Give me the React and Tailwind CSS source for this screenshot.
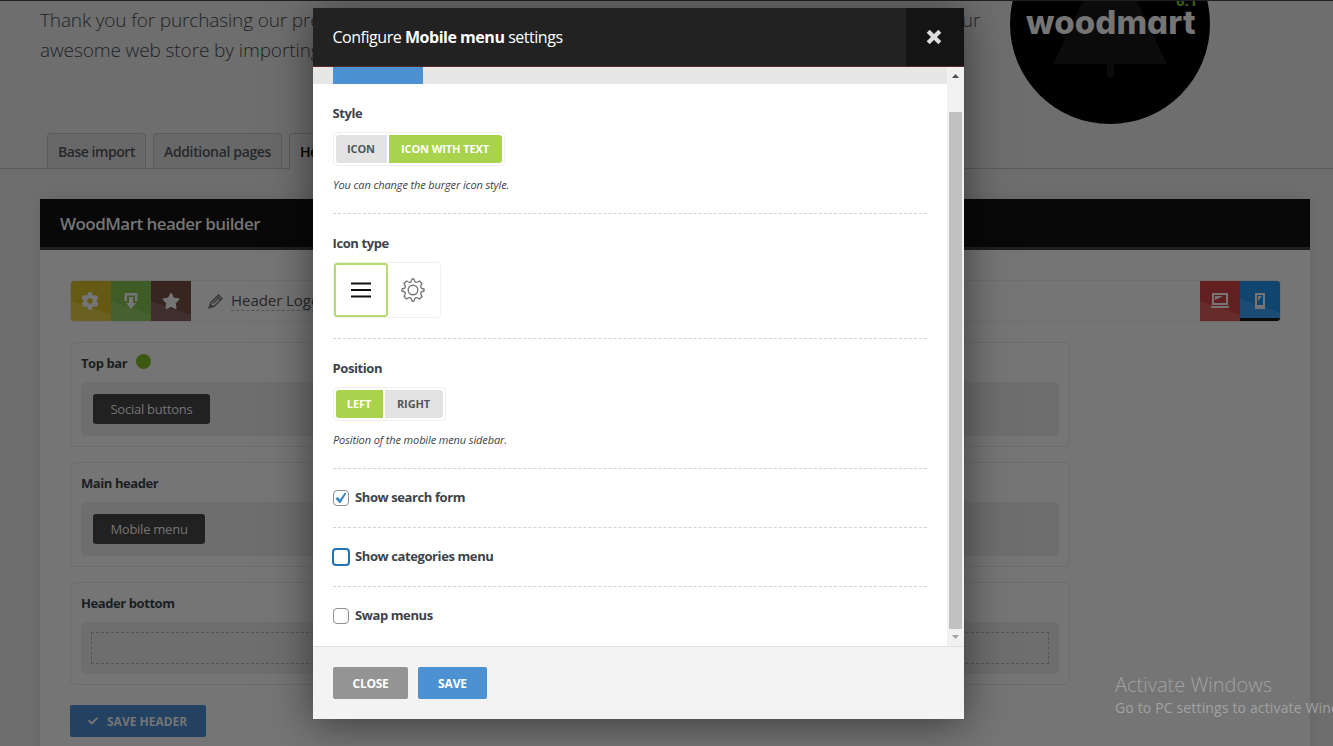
import clsx from "clsx";
import { FaCog, FaStar, FaCheck } from "react-icons/fa";

const rows = [
  { title: "Top bar", element: "Social buttons", width: "w-[117px]", active: true },
  { title: "Main header", element: "Mobile menu", width: "w-[112px]" },
  { title: "Header bottom" },
];

function Logo() {
  return (
    <div className="absolute left-[1010px] top-[-76px] size-[200px] rounded-full bg-black">
      <svg className="absolute inset-0" width="200" height="200" viewBox="0 0 200 200">
        <path d="M100 20 L157 140 H43 Z M97 140 H104 V153 H97 Z" fill="#0b0b0b" />
      </svg>
      <span className="absolute left-[166px] top-[68px] text-[15px] leading-[16px] font-bold text-[#3d5c10]">6.1</span>
      <span className="absolute left-[16px] top-[78px] font-['Inter',sans-serif] text-[33px] leading-[40px] font-extrabold tracking-[0.1px] text-[#757575] [font-feature-settings:'cv11']">
        woodmart
      </span>
    </div>
  );
}

function Intro() {
  return (
    <div className="h-[132px] pl-10 pt-[4px] whitespace-nowrap text-[19px] leading-[30px] font-light text-[#202327]">
      <p className="tracking-[-0.14px]">
        Thank you for purchasing our premium eCommerce theme - WoodMart. Here you are able to start creating your
      </p>
      <p className="tracking-[-0.1px]">awesome web store by importing our dummy content and theme options.</p>
    </div>
  );
}

function Tabs() {
  return (
    <div className="flex h-9 items-end gap-[7px] border-b border-[#5b5b5b] pl-[47px] text-[14px] font-semibold text-[#25282c]">
      <div className="flex h-[35px] w-[99px] items-center justify-center rounded-t-[4px] border border-b-0 border-[#5b5b5b] bg-[#686868] tracking-[-0.45px]">
        Base import
      </div>
      <div className="flex h-[35px] w-[129px] items-center justify-center whitespace-nowrap rounded-t-[4px] border border-b-0 border-[#5b5b5b] bg-[#686868] tracking-[-0.35px]">
        Additional pages
      </div>
      <div className="-mb-px flex h-9 w-[129px] items-center rounded-t-[4px] border border-b-0 border-[#5b5b5b] bg-[#6e6e6e] pl-[10px] tracking-[-0.4px] text-black">
        Header builder
      </div>
    </div>
  );
}

function Toolbar() {
  return (
    <div className="flex h-[42px] w-[1211px] items-center rounded-[4px] border border-[#6e6e6e]">
      <div className="flex overflow-hidden rounded-l-[3px] text-[#757575]">
        <div className="flex size-10 items-center justify-center bg-[linear-gradient(199deg,#645a14_63%,#6a6020_63%)] pr-[2px]">
          <FaCog size={18} />
        </div>
        <div className="flex size-10 items-center justify-center bg-[linear-gradient(199deg,#3f5b26_63%,#466030_63%)]">
          <svg width="14" height="17" viewBox="0 0 14 17" fill="currentColor">
            <path d="M0.500 0H13.500V8H11V2.500H3V8H0.500ZM5 4H9V10H12L7 16L2 10H5Z" />
          </svg>
        </div>
        <div className="flex size-10 items-center justify-center bg-[linear-gradient(199deg,#37251f_63%,#40302d_63%)]">
          <FaStar size={18} />
        </div>
      </div>
      <svg className="ml-[17px]" width="16" height="16" viewBox="0 0 16 16" fill="none" stroke="#3a3a3a" strokeWidth="1.500">
        <path d="M1.500 14.500L3 9.500L10.500 2L14 5.500L6.500 13Z M9 3.500L12.500 7M5 10.500L10 5.500" />
        <path d="M1.500 14.500L2.500 11.500L4.500 13.500Z" fill="#3a3a3a" />
      </svg>
      <span className="-mt-px ml-[7px] border-b border-dashed border-[#555] text-[15px] leading-[20px] font-medium tracking-[-0.05px] text-[#25282c]">
        Header Logo
      </span>
      <div className="ml-auto flex overflow-hidden rounded-r-[3px] text-[#757575]">
        <div className="flex size-10 items-center justify-center bg-[linear-gradient(199deg,#622021_63%,#662b2b_63%)]">
          <svg width="18" height="16" viewBox="0 0 18 16" fill="currentColor">
            <path fillRule="evenodd" d="M1 0H17V12H1ZM3 2V10H15V2Z" />
            <path d="M0 13H18V15H0ZM4 3H12L4 7Z" />
          </svg>
        </div>
        <div className="flex size-10 items-center justify-center border-b-[3px] border-[#0b0b0b] bg-[linear-gradient(199deg,#12456e_63%,#1c4c73_63%)] pt-[3px]">
          <svg width="10" height="16" viewBox="0 0 10 16" fill="currentColor">
            <path fillRule="evenodd" d="M0 0H10V16H0ZM2 2V12H8V2Z" />
            <path d="M3 3H7L3 8Z" />
          </svg>
        </div>
      </div>
    </div>
  );
}

function HeaderRow({ title, element, width, active }) {
  return (
    <div className={clsx("w-[1000px] rounded-[5px] border border-[#6c6c6c] px-[10px] pt-px", element ? "h-[105px]" : "h-[103px]")}>
      <div className="flex h-[38px] items-center gap-[9px] text-[13px] font-bold text-[#1b1e22]">
        <span className="pt-[2px] tracking-[-0.42px]">{title}</span>
        {active && <span className="mb-[3px] size-[15px] rounded-full bg-[#3c5914]" />}
      </div>
      {element ? (
        <div className="flex h-[54px] items-center rounded-[5px] bg-[#6e6e6e] pl-3">
          <div
            className={clsx(
              "flex h-[30px] items-center justify-center rounded-[3px] bg-[#212121] pt-px text-[13px] tracking-[-0.25px] text-[#757575]",
              width
            )}
          >
            {element}
          </div>
        </div>
      ) : (
        <div className="h-[52px] rounded-[5px] bg-[#6e6e6e] p-[10px]">
          <div className="h-8 border border-dashed border-[#555]" />
        </div>
      )}
    </div>
  );
}

function Builder() {
  return (
    <div className="ml-10 mt-[30px] h-[600px] w-[1270px] bg-[#757575] shadow-[0_0_14px_rgba(0,0,0,0.08)]">
      <div className="flex h-[51px] items-center border-b-[3px] border-[#1f1f1f] bg-[#080808] pl-5 pt-[2px] text-[17px] font-semibold tracking-[-0.55px] text-[#757575]">
        WoodMart header builder
      </div>
      <div className="px-[30px] pt-[30px]">
        <Toolbar />
        <div className="mt-5 flex flex-col gap-[15px]">
          {rows.map((row) => (
            <HeaderRow key={row.title} {...row} />
          ))}
        </div>
        <button className="mt-5 flex h-8 w-[136px] items-center rounded-[2px] bg-[#234261] pl-[18px] text-[12px] font-bold text-[#757575]">
          <FaCheck size={10} />
          <span className="ml-[9px] pt-[2px]">SAVE HEADER</span>
        </button>
      </div>
    </div>
  );
}

function Label({ children }) {
  return <div className="-ml-[0.5px] mb-[9px] h-5 text-[13px] leading-5 font-bold tracking-[-0.4px] text-[#3c434a]">{children}</div>;
}

function Switcher({ options, value }) {
  return (
    <div className="inline-flex h-[34px] gap-[2px] rounded-[4px] border border-[#efefef] p-[2px] text-[11px] font-bold">
      {options.map((o) => (
        <div
          key={o.label}
          className={clsx(
            "flex h-7 items-center justify-center whitespace-nowrap pr-px tracking-[-0.1px] first:rounded-l-[3px] last:rounded-r-[3px]",
            o.width,
            o.label === value ? "bg-[#a9d34d] text-white" : "bg-[#e3e3e3] text-[#50575e]"
          )}
        >
          {o.label}
        </div>
      ))}
    </div>
  );
}

function Hint({ children }) {
  return <div className="mt-[10px] h-[18px] text-[11px] leading-[18px] tracking-[-0.12px] italic text-[#3c434a]">{children}</div>;
}

function CheckRow({ label, checked, focused, last }) {
  return (
    <div className={clsx("flex h-[59px] items-center border-b border-dashed", last ? "border-transparent" : "border-[#d3d3d3]")}>
      <span
        className={clsx(
          "flex items-center justify-center rounded-[4px] bg-white",
          focused ? "-ml-px size-[18px] border-2 border-[#2271b1]" : "size-4 border border-[#8c8f94]"
        )}
      >
        {checked && (
          <svg width="12" height="12" viewBox="0 0 12 12" fill="#3582c4">
            <path d="M0.500 6.500L2.500 5L5 7.500L9.500 1H11.500L5.500 11H4.500Z" />
          </svg>
        )}
      </span>
      <span
        className={clsx(
          "mb-[2px] text-[13px] leading-5 font-bold tracking-[-0.4px] text-[#3c434a]",
          focused ? "ml-[5px]" : "ml-[6px]"
        )}
      >
        {label}
      </span>
    </div>
  );
}

function Modal() {
  return (
    <div className="absolute left-[313px] top-2 flex h-[711px] w-[651px] flex-col bg-white shadow-[0_5px_40px_rgba(0,0,0,0.5)]">
      <div className="flex h-[59px] items-stretch border-b border-[#5d2a2a] bg-[#222] text-white">
        <h3 className="flex-1 self-center pl-[19.5px] text-[16px] tracking-[-0.47px]">
          Configure <b className="font-bold">Mobile menu</b> settings
        </h3>
        <div className="flex w-[58px] items-center justify-center bg-[#141414] pr-[2px]">
          <svg width="16" height="16" viewBox="0 0 16 16" stroke="#dcdcdc" strokeWidth="4.200">
            <path d="M2.200 2.200L13.800 13.800M13.800 2.200L2.200 13.800" />
          </svg>
        </div>
      </div>

      <div className="flex h-[579px]">
        <div className="w-[634px]">
          <div className="h-[17px] bg-[#e7e7e7] pl-5">
            <div className="h-full w-[90px] bg-[#4c92d2]" />
          </div>
          <div className="px-5">
            <div className="h-[130px] border-b border-dashed border-[#d3d3d3] pt-[19px]">
              <Label>Style</Label>
              <Switcher
                value="ICON WITH TEXT"
                options={[
                  { label: "ICON", width: "w-[51px]" },
                  { label: "ICON WITH TEXT", width: "w-[113px]" },
                ]}
              />
              <Hint>You can change the burger icon style.</Hint>
            </div>

            <div className="h-[125px] border-b border-dashed border-[#d3d3d3] pt-[19px]">
              <Label>Icon type</Label>
              <div className="flex h-14 w-[108px] items-center rounded-[4px] border border-[#efefef]">
                <div className="flex size-[54px] items-center justify-center rounded-[3px] border-2 border-[#b6db6c]">
                  <svg width="20" height="16" viewBox="0 0 20 16" fill="#111">
                    <path d="M0 0.500H20V2.500H0ZM0 7H20V9H0ZM0 13.500H20V15.500H0Z" />
                  </svg>
                </div>
                <div className="flex flex-1 items-center justify-center pr-[2px]">
                  <Gear />
                </div>
              </div>
            </div>

            <div className="h-[130px] border-b border-dashed border-[#d3d3d3] pt-[19px]">
              <Label>Position</Label>
              <Switcher
                value="LEFT"
                options={[
                  { label: "LEFT", width: "w-[47px]" },
                  { label: "RIGHT", width: "w-[58px]" },
                ]}
              />
              <Hint>Position of the mobile menu sidebar.</Hint>
            </div>

            <CheckRow label="Show search form" checked />
            <CheckRow label="Show categories menu" focused />
            <CheckRow label="Swap menus" last />
          </div>
        </div>

        {/* scrollbar */}
        <div className="flex w-[17px] flex-col items-center bg-[#f1f1f1]">
          <svg className="mt-[7px]" width="7" height="4" viewBox="0 0 7 4">
            <path d="M3.500 0L7 4H0Z" fill="#505050" />
          </svg>
          <div className="mt-[34px] h-[517px] w-[13px] bg-[#c1c1c1]" />
          <svg className="mt-[6px]" width="7" height="4" viewBox="0 0 7 4">
            <path d="M0 0H7L3.500 4Z" fill="#a3a3a3" />
          </svg>
        </div>
      </div>

      <div className="flex flex-1 gap-[10px] border-t border-[#e1e1e1] bg-[#f3f3f3] px-5 pt-5 text-[12px] font-bold text-white">
        <button className="h-8 w-[75px] rounded-[2px] bg-[#949494] pt-[2px] tracking-[-0.3px]">CLOSE</button>
        <button className="h-8 w-[69px] rounded-[2px] bg-[#4c92d2] pt-[2px] tracking-[-0.1px]">SAVE</button>
      </div>
    </div>
  );
}

function Gear() {
  return (
    <svg width="24" height="24" viewBox="0 0 24 24" fill="none" stroke="#777" strokeWidth="1.400">
      <circle cx="12" cy="12" r="4.800" />
      <path
        strokeLinejoin="round"
        d="M11 1H13Q13.500 4 14.800 4.300Q16 4.600 18.500 3L21 5.500Q19.300 8 19.700 9.200Q20.200 10.500 23 11V13Q20.200 13.500 19.700 14.800Q19.300 16 21 18.500L18.500 21Q16 19.400 14.800 19.700Q13.500 20 13 23H11Q10.500 20 9.200 19.700Q8 19.400 5.500 21L3 18.500Q4.700 16 4.300 14.800Q3.800 13.500 1 13V11Q3.800 10.500 4.300 9.200Q4.700 8 3 5.500L5.500 3Q8 4.600 9.200 4.300Q10.500 4 11 1Z"
      />
    </svg>
  );
}

export default function App() {
  return (
    <div className="relative h-[746px] w-[1333px] overflow-hidden bg-[#6e6e6e] font-['Open_Sans','Noto_Sans',sans-serif]">
      <Logo />
      <div className="relative h-px bg-[#1b2027]" />
      <Intro />
      <Tabs />
      <Builder />
      <Modal />
      <div className="absolute left-[1115px] top-[671px] whitespace-nowrap text-[#a2a2a2]">
        <div className="text-[20px] leading-7 font-light">Activate Windows</div>
        <div className="text-[14px] leading-[18px] tracking-[0.15px]">Go to PC settings to activate Windows.</div>
      </div>
    </div>
  );
}
